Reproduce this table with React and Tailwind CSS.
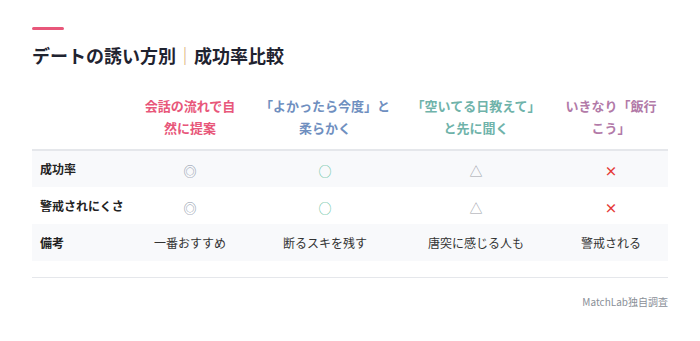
import React from 'react';

const heads = [
    { lines: ['会話の流れで自', '然に提案'], color: 'text-[#e8577a]', w: 'w-[124px]' },
    { lines: ['「よかったら今度」と', '柔らかく'], color: 'text-[#6f8fc0]', w: 'w-[146px]' },
    { lines: ['「空いてる日教えて」', 'と先に聞く'], color: 'text-[#6fb3aa]', w: 'w-[156px]' },
    { lines: ['いきなり「飯行', 'こう」'], color: 'text-[#b27aa8]', w: 'w-[114px]' },
];

const Mark = ({ type }) => {
    if (type === 'double') return <span className="text-[#8b95a8] text-[13px]">◎</span>;
    if (type === 'circle') return <span className="text-[#5fc2a0] text-[13px]">○</span>;
    if (type === 'tri') return <span className="text-[#9aa0a8] text-[13px]">△</span>;
    return <span className="text-[#e53935] text-[13px] font-bold">×</span>;
};

const rows = [
    { label: '成功率', cells: ['double', 'circle', 'tri', 'x'], bg: 'bg-[#f8f9fb]' },
    { label: '警戒されにくさ', cells: ['double', 'circle', 'tri', 'x'], bg: 'bg-white' },
];

const notes = ['一番おすすめ', '断るスキを残す', '唐突に感じる人も', '警戒される'];

const App = () => {
    return (
        <div className="w-[700px] h-[341px] bg-white px-8 pt-[27px] font-['Noto_Sans_CJK_JP','Noto_Sans',sans-serif]">
            <div className="w-8 h-[3px] bg-[#e8577a] rounded-full"></div>
            <h2 className="mt-3 text-[18px] leading-[27px] font-bold text-[#1f2330]">
                デートの誘い方別<span className="text-[#d9a66f] font-normal">｜</span>成功率比較
            </h2>

            <table className="mt-4 w-[636px] border-collapse table-fixed">
                <thead>
                    <tr className="border-b-2 border-[#e5e7eb]">
                        <th className="w-[96px]"></th>
                        {heads.map((h) => (
                            <th key={h.lines[0]} className={`${h.w} px-1 py-[10px] text-[13px] leading-[22px] font-bold text-center whitespace-nowrap ${h.color}`}>
                                {h.lines[0]}
                                <br />
                                {h.lines[1]}
                            </th>
                        ))}
                    </tr>
                </thead>
                <tbody>
                    {rows.map((r) => (
                        <tr key={r.label} className={`${r.bg} h-[37px]`}>
                            <td className="pl-2 text-[12px] font-bold text-[#222]">{r.label}</td>
                            {r.cells.map((c, i) => (
                                <td key={i} className="text-center">
                                    <Mark type={c} />
                                </td>
                            ))}
                        </tr>
                    ))}
                    <tr className="bg-[#f8f9fb] h-[37px]">
                        <td className="pl-2 text-[12px] font-bold text-[#222]">備考</td>
                        {notes.map((n) => (
                            <td key={n} className="text-center text-[12px] text-[#333]">{n}</td>
                        ))}
                    </tr>
                </tbody>
            </table>

            <div className="mt-4 border-t border-[#e5e7eb] pt-4 text-right text-[10px] text-[#8a8f98]">
                MatchLab独自調査
            </div>
        </div>
    );
};

export default App;
